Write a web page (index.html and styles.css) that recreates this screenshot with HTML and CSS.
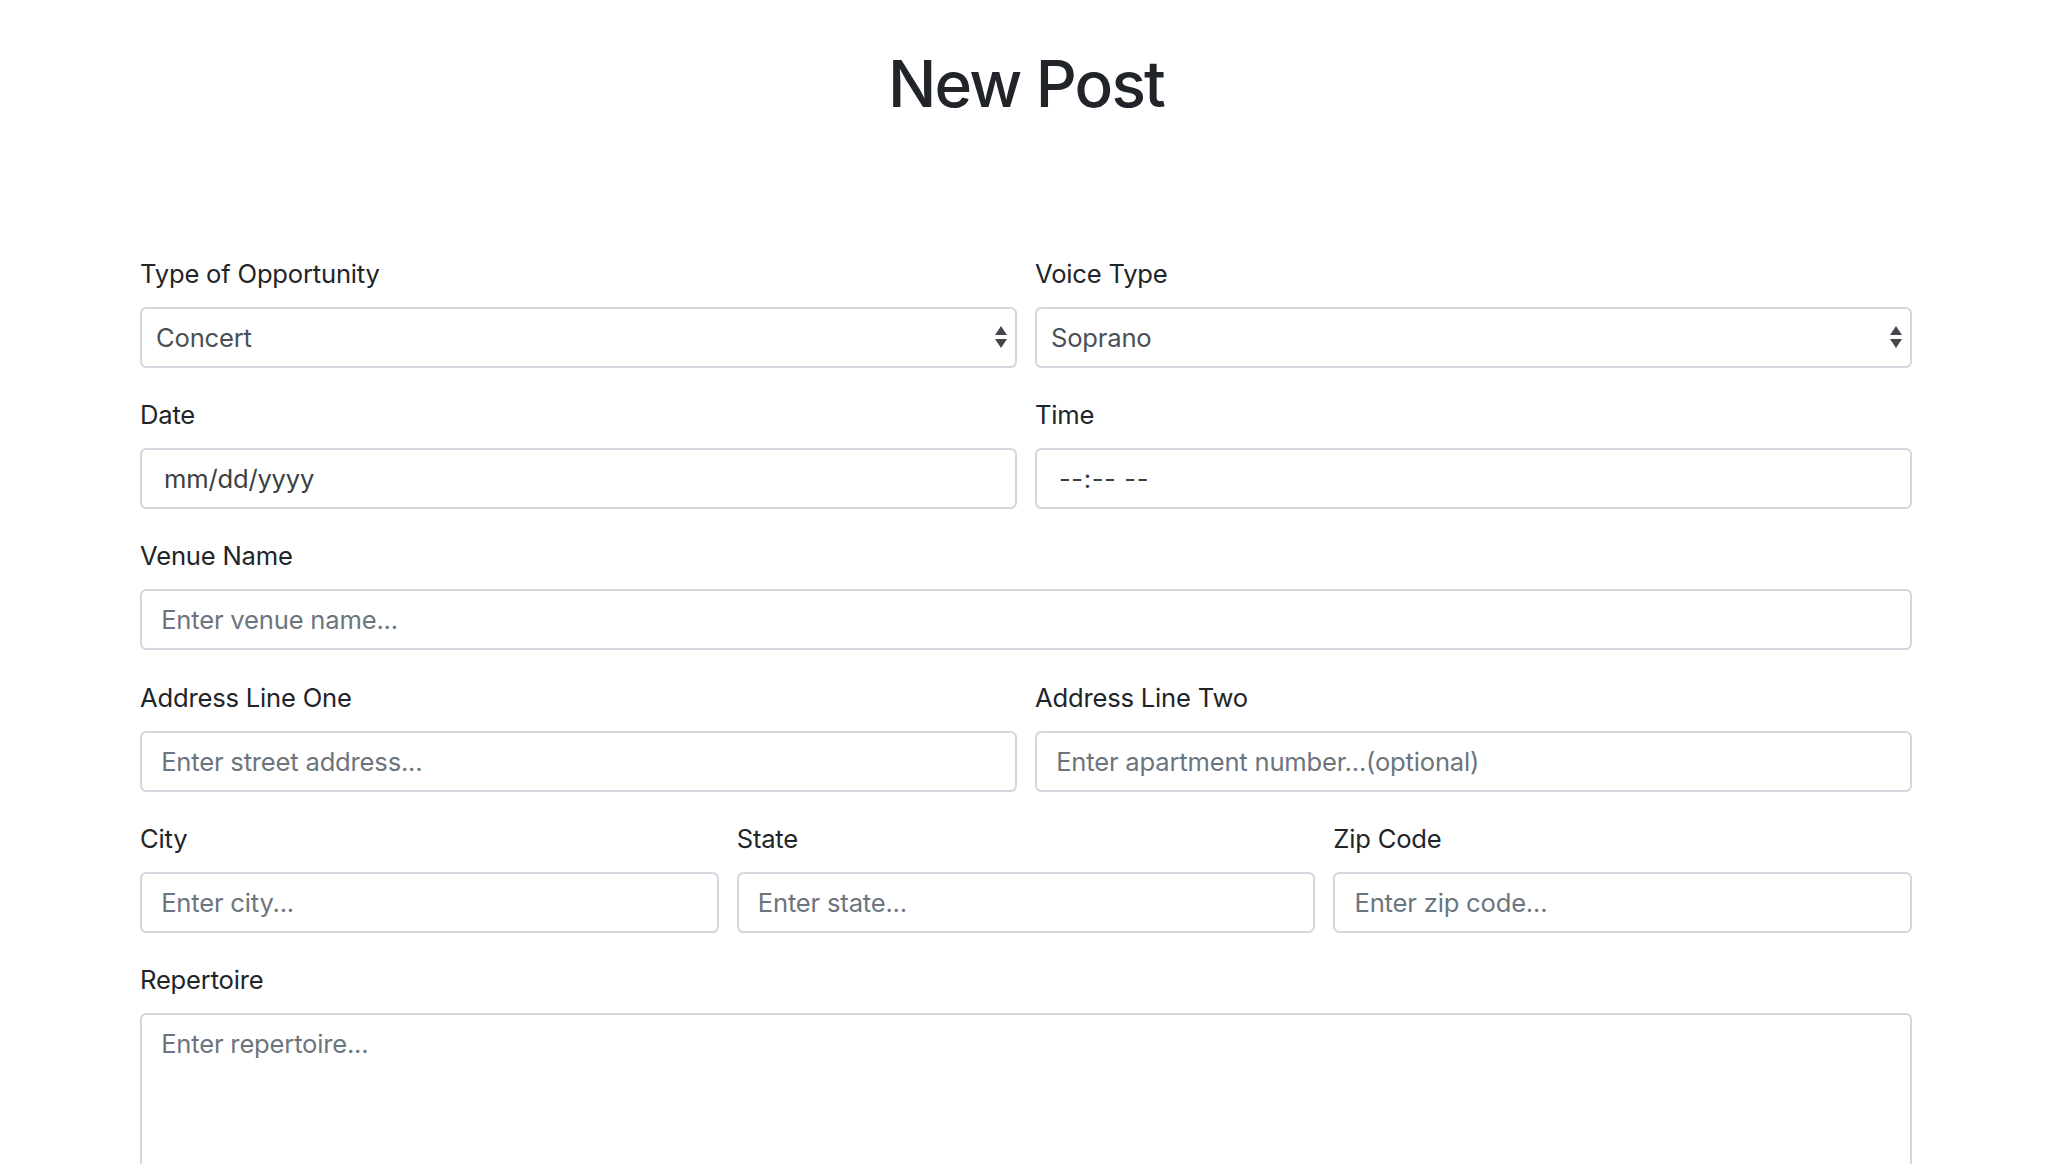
FILE: index.html
```html
<!DOCTYPE html>
<html lang="en">
<head>
<meta charset="utf-8">
<title>New Post</title>
<link rel="stylesheet" href="styles.css">
</head>
<body>
<div class="container">
  <h1 class="title">New Post</h1>
  <form class="post-form">
    <div class="row row-2">
      <div class="group">
        <label class="label" for="type">Type of Opportunity</label>
        <div class="select-wrap">
          <select id="type" class="control select">
            <option>Concert</option>
          </select>
          <svg class="arrows" width="12" height="22" viewBox="0 0 12 22"><path d="M0 9 L6 0 L12 9 Z M0 13 L12 13 L6 22 Z" fill="#44484d"/></svg>
        </div>
      </div>
      <div class="group">
        <label class="label" for="voice">Voice Type</label>
        <div class="select-wrap">
          <select id="voice" class="control select">
            <option>Soprano</option>
          </select>
          <svg class="arrows" width="12" height="22" viewBox="0 0 12 22"><path d="M0 9 L6 0 L12 9 Z M0 13 L12 13 L6 22 Z" fill="#44484d"/></svg>
        </div>
      </div>
    </div>
    <div class="row row-2">
      <div class="group">
        <label class="label" for="date">Date</label>
        <input id="date" class="control date" type="text" value="mm/dd/yyyy">
      </div>
      <div class="group">
        <label class="label" for="time">Time</label>
        <input id="time" class="control date time" type="text" value="--:-- --">
      </div>
    </div>
    <div class="group">
      <label class="label" for="venue">Venue Name</label>
      <input id="venue" class="control" type="text" placeholder="Enter venue name...">
    </div>
    <div class="row row-2">
      <div class="group">
        <label class="label" for="addr1">Address Line One</label>
        <input id="addr1" class="control" type="text" placeholder="Enter street address...">
      </div>
      <div class="group">
        <label class="label" for="addr2">Address Line Two</label>
        <input id="addr2" class="control" type="text" placeholder="Enter apartment number...(optional)">
      </div>
    </div>
    <div class="row row-3">
      <div class="group">
        <label class="label" for="city">City</label>
        <input id="city" class="control" type="text" placeholder="Enter city...">
      </div>
      <div class="group">
        <label class="label" for="state">State</label>
        <input id="state" class="control" type="text" placeholder="Enter state...">
      </div>
      <div class="group">
        <label class="label" for="zip">Zip Code</label>
        <input id="zip" class="control" type="text" placeholder="Enter zip code...">
      </div>
    </div>
    <div class="group">
      <label class="label" for="rep">Repertoire</label>
      <textarea id="rep" class="control textarea" placeholder="Enter repertoire..."></textarea>
    </div>
  </form>
</div>
</body>
</html>
```

FILE: styles.css
```css
* { box-sizing: border-box; }

body {
  margin: 0;
  background: #fff;
  color: #212529;
  font-family: Inter, "Noto Sans", "Liberation Sans", sans-serif;
}

.container {
  width: 1772px;
  margin: 0 0 0 140px;
}

.title {
  margin: 46px 0 0;
  font-size: 64px;
  line-height: 76.8px;
  font-weight: 500;
  text-align: center;
  color: #212529;
  letter-spacing: -1.8px;
}

.post-form {
  margin-top: 132px;
}

.row {
  display: grid;
  column-gap: 18px;
}

.row-2 { grid-template-columns: 1fr 1fr; }
.row-3 { grid-template-columns: 1fr 1fr 1fr; }

.group {
  margin-bottom: 28.3px;
}

.label {
  display: block;
  font-size: 25.6px;
  line-height: 38px;
  margin-bottom: 14px;
  color: #212529;
  letter-spacing: -0.2px;
}

.control {
  display: block;
  width: 100%;
  height: 61px;
  padding: 0 19.2px;
  font-family: inherit;
  font-size: 25.6px;
  color: #495057;
  background: #fff;
  border: 2px solid #d3d8de;
  border-radius: 6.4px;
  outline: none;
  letter-spacing: -0.2px;
}

.control::placeholder {
  color: #6c757d;
  opacity: 1;
}

.date {
  padding-left: 22px;
  color: #3b3f44;
}

.time {
  letter-spacing: 0.6px;
}

.select-wrap {
  position: relative;
}

.select {
  appearance: none;
  -webkit-appearance: none;
  padding-left: 14px;
}

.arrows {
  position: absolute;
  right: 10px;
  top: 19px;
  pointer-events: none;
}

.textarea {
  height: 220px;
  padding-top: 9.6px;
  resize: none;
  line-height: 38.4px;
}
```
